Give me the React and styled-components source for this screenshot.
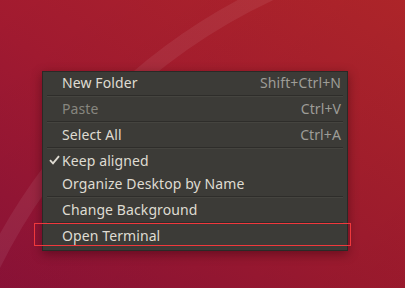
import React from "react";
import styled, { createGlobalStyle } from "styled-components";

const Global = createGlobalStyle`
  html, body { margin: 0; padding: 0; }
  body { width: 405px; height: 288px; overflow: hidden; }
`;

const Desktop = styled.div`
  position: relative;
  width: 405px;
  height: 288px;
  overflow: hidden;
  box-sizing: border-box;
  padding: 71px 0 0 42px;
  font-family: "Noto Sans", "Open Sans", sans-serif;
`;

const Wallpaper = styled.svg`
  position: absolute;
  inset: 0;
  z-index: 0;
`;

const Menu = styled.div`
  position: relative;
  z-index: 1;
  width: 306px;
  box-sizing: border-box;
  background: #3c3b37;
  border: 1px solid #2a2926;
  padding: 0 0 2px;
  box-shadow: 0 3px 10px rgba(40, 0, 10, 0.45);
  display: flex;
  flex-direction: column;
`;

const Item = styled.div`
  position: relative;
  height: 23px;
  box-sizing: border-box;
  display: flex;
  align-items: center;
  padding: 0 6px 2px 19px;
  font-size: 14px;
  letter-spacing: 0.1px;
  color: ${(p) => (p.$disabled ? "#87867f" : "#dfdbd2")};
  ${(p) =>
    p.$highlight &&
    `
    &::after {
      content: "";
      position: absolute;
      left: -9px;
      right: -4px;
      top: -2px;
      bottom: 2px;
      border: 1px solid #f0383c;
      pointer-events: none;
    }
  `}
`;

const Label = styled.span`
  flex: 1;
  white-space: nowrap;
`;

const Shortcut = styled.span`
  color: #9e9d97;
  white-space: nowrap;
`;

const Check = styled.svg`
  position: absolute;
  left: 6px;
  top: 5px;
`;

const Separator = styled.div`
  height: 1px;
  margin: 0 4px 2px;
  background: #2e2d2a;
  box-shadow: 0 1px 0 #45443f;
`;

const items = [
  { label: "New Folder", shortcut: "Shift+Ctrl+N" },
  "sep",
  { label: "Paste", shortcut: "Ctrl+V", disabled: true },
  "sep",
  { label: "Select All", shortcut: "Ctrl+A" },
  "sep",
  { label: "Keep aligned", checked: true },
  { label: "Organize Desktop by Name" },
  "sep",
  { label: "Change Background" },
  "sep",
  { label: "Open Terminal", highlight: true },
];

export default function App() {
  return (
    <>
      <Global />
      <Desktop>
        <Wallpaper width="405" height="288" viewBox="0 0 405 288">
          <defs>
            <linearGradient id="bg" x1="0" y1="1" x2="1" y2="0">
              <stop offset="0" stopColor="#8c1238" />
              <stop offset="0.45" stopColor="#a11a30" />
              <stop offset="1" stopColor="#b2262a" />
            </linearGradient>
            <linearGradient id="shade" x1="0" y1="0" x2="1" y2="1">
              <stop offset="0" stopColor="#000" stopOpacity="0" />
              <stop offset="1" stopColor="#000" stopOpacity="0.06" />
            </linearGradient>
          </defs>
          <rect width="405" height="288" fill="url(#bg)" />
          <rect width="405" height="288" fill="url(#shade)" />
          <circle cx="520" cy="525" r="588" fill="none" stroke="#ffffff" strokeOpacity="0.07" strokeWidth="16" />
        </Wallpaper>
        <Menu>
          {items.map((it, i) =>
            it === "sep" ? (
              <Separator key={i} />
            ) : (
              <Item key={i} $disabled={it.disabled} $highlight={it.highlight}>
                {it.checked && (
                  <Check width="11" height="10" viewBox="0 0 11 10">
                    <path d="M1 5.2 L4 8.3 L10 1.2" fill="none" stroke="#dfdbd2" strokeWidth="1.9" />
                  </Check>
                )}
                <Label>{it.label}</Label>
                {it.shortcut && <Shortcut>{it.shortcut}</Shortcut>}
              </Item>
            )
          )}
        </Menu>
      </Desktop>
    </>
  );
}
